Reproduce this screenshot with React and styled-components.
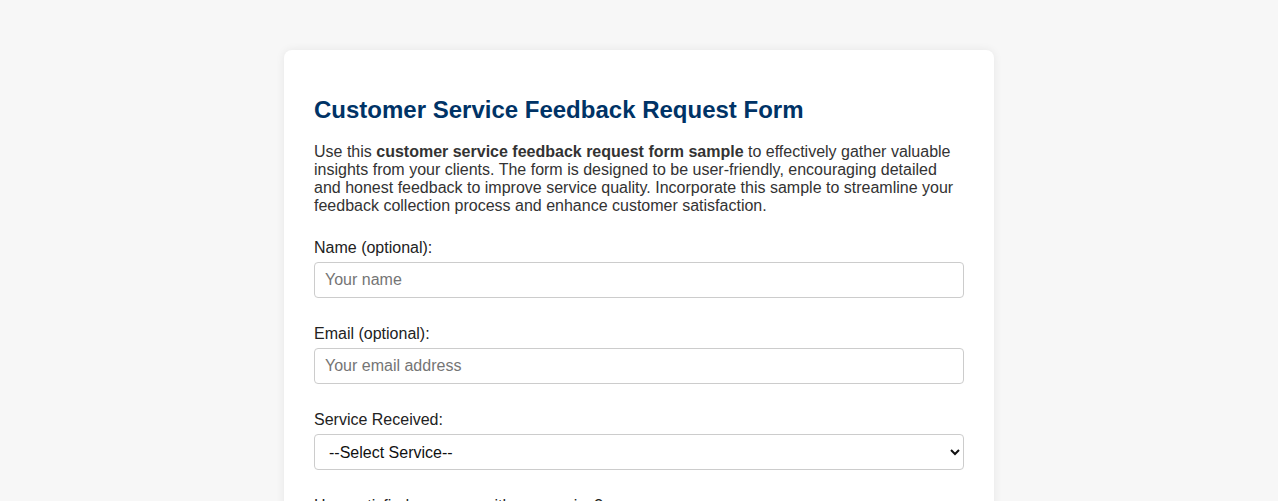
import React from "react"
import styled, { createGlobalStyle } from "styled-components"

const GlobalStyle = createGlobalStyle`
  body {
    margin: 0;
    padding: 20px;
    background: #f7f7f7;
    font-family: "Liberation Sans", Arial, sans-serif;
    color: #333;
  }
`

const Container = styled.div`
  max-width: 650px;
  margin: 30px auto;
  padding: 30px;
  background: #fff;
  border-radius: 8px;
  box-shadow: 0 0 10px rgba(0, 0, 0, 0.07);
`

const Title = styled.h1`
  font-size: 24px;
  color: #003366;
  margin: 16px 0;
`

const Intro = styled.p`
  font-size: 16px;
  line-height: 18px;
  color: #333;
  margin: 19px 0 24px;
`

const Group = styled.div`
  margin-bottom: 27px;
`

const Label = styled.label`
  display: block;
  font-size: 16px;
  line-height: 18px;
  color: #222;
  margin-bottom: 5px;
`

const Input = styled.input`
  display: block;
  box-sizing: border-box;
  width: 100%;
  height: 36px;
  padding: 8px 10px;
  border: 1px solid #ccc;
  border-radius: 4px;
  font-family: "Liberation Sans", Arial, sans-serif;
  font-size: 16px;
  color: #333;

  &::placeholder {
    color: #757575;
  }
`

const Select = styled.select`
  display: block;
  box-sizing: border-box;
  width: 100%;
  height: 36px;
  padding: 8px 10px;
  border: 1px solid #ccc;
  border-radius: 4px;
  background: #fff;
  font-family: "Liberation Sans", Arial, sans-serif;
  font-size: 16px;
  color: #111;
`

function App() {
  return (
    <>
      <GlobalStyle />
      <Container>
        <Title>Customer Service Feedback Request Form</Title>
        <Intro>
          Use this <strong>customer service feedback request form sample</strong> to effectively gather valuable
          insights from your clients. The form is designed to be user-friendly, encouraging detailed and honest
          feedback to improve service quality. Incorporate this sample to streamline your feedback collection
          process and enhance customer satisfaction.
        </Intro>
        <form>
          <Group>
            <Label htmlFor="name">Name (optional):</Label>
            <Input id="name" type="text" placeholder="Your name" />
          </Group>
          <Group>
            <Label htmlFor="email">Email (optional):</Label>
            <Input id="email" type="email" placeholder="Your email address" />
          </Group>
          <Group>
            <Label htmlFor="service">Service Received:</Label>
            <Select id="service" defaultValue="">
              <option value="">--Select Service--</option>
              <option value="support">Customer Support</option>
              <option value="sales">Sales</option>
              <option value="technical">Technical Assistance</option>
            </Select>
          </Group>
          <Group>
            <Label htmlFor="rating">How satisfied were you with our service?</Label>
            <Select id="rating" defaultValue="">
              <option value="">--Select Rating--</option>
            </Select>
          </Group>
        </form>
      </Container>
    </>
  )
}

export default App
